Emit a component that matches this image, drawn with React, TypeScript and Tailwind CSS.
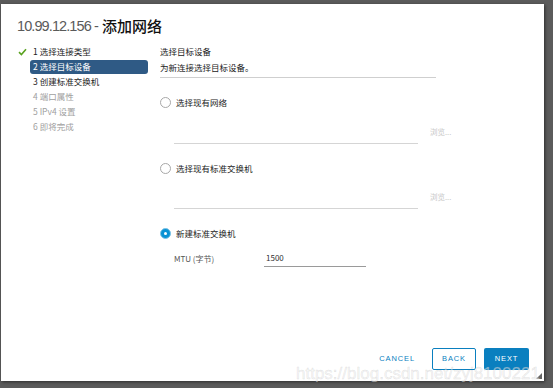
import React from "react";

const cjk = { fontFamily: '"Noto Sans CJK SC", "Noto Sans", sans-serif' };
const latin = { fontFamily: '"Liberation Sans", "Noto Sans CJK SC", sans-serif' };

function Radio({ checked, label }: { checked?: boolean; label: string }) {
  return (
    <div className="flex h-[14px] items-center">
      {checked ? (
        <span className="flex h-[11px] w-[11px] items-center justify-center rounded-full border border-[#7cc3e6] bg-[#0a92d4]">
          <span className="h-[3px] w-[3px] rounded-full bg-white" />
        </span>
      ) : (
        <span className="h-[11px] w-[11px] rounded-full border border-[#a8a8a8] bg-white" />
      )}
      <span className="ml-[5px] text-[8.5px] text-[#222]" style={cjk}>
        {label}
      </span>
    </div>
  );
}

function BrowseRow() {
  return (
    <div className="flex h-[20px] items-center">
      <div className="ml-[14px] h-[20px] w-[244px] border-b border-[#d5d5d5]" />
      <span className="ml-[12px] -mt-[4px] text-[7.5px] text-[#c8c8c8]" style={cjk}>
        浏览...
      </span>
    </div>
  );
}

export default function App() {
  const steps = [
    { n: "1", t: "选择连接类型", state: "done" },
    { n: "2", t: "选择目标设备", state: "active" },
    { n: "3", t: "创建标准交换机", state: "todo" },
    { n: "4", t: "端口属性", state: "off" },
    { n: "5", t: "IPv4 设置", state: "off" },
    { n: "6", t: "即将完成", state: "off" },
  ];
  return (
    <div className="relative h-[388px] w-[553px] overflow-hidden bg-[#5b5b5b] pl-[1px] pt-[4px]">
      <div className="relative flex h-[377px] w-[543px] flex-col bg-white shadow-[1px_1px_3px_rgba(0,0,0,0.5)]">
        {/* Title */}
        <div className="flex h-[40px] items-center pl-[16px] pt-[5px]">
          <span className="text-[14.5px] font-light tracking-[-0.9px] text-[#5a5a5a]" style={latin}>
            10.99.12.156 -{" "}
          </span>
          <span className="ml-[4px] text-[15px] font-medium text-[#111]" style={cjk}>
            添加网络
          </span>
        </div>
        {/* Body */}
        <div className="flex flex-1">
          <div className="w-[159px] pl-[17px]">
            {steps.map((s) => (
              <div key={s.n} className="flex h-[15px] items-center">
                <span className="flex w-[12px] items-center">
                  {s.state === "done" && (
                    <svg width="9" height="8" viewBox="0 0 9 8">
                      <path d="M1 4.2 L3.4 6.5 L8 1.2" fill="none" stroke="#5aa220" strokeWidth="1.6" />
                    </svg>
                  )}
                </span>
                <span
                  className={
                    s.state === "active"
                      ? "flex h-[14px] w-[118px] items-center rounded-[3px] bg-[#2f5a85] pl-[3px] text-white"
                      : "flex h-[14px] items-center pl-[3px] " +
                        (s.state === "off" ? "text-[#a0a0a0]" : "text-[#222]")
                  }
                >
                  <span className="text-[8.5px]" style={cjk}>
                    {s.n} {s.t}
                  </span>
                </span>
              </div>
            ))}
          </div>
          <div className="flex flex-col">
            <div className="flex h-[15px] items-center text-[8.5px] text-[#222]" style={cjk}>
              选择目标设备
            </div>
            <div className="flex h-[16px] items-center text-[8.5px] text-[#222]" style={cjk}>
              为新连接选择目标设备。
            </div>
            <div className="mt-[2px] h-px w-[276px] bg-[#cfcfcf]" />
            <div className="mt-[17px]">
              <Radio label="选择现有网络" />
            </div>
            <div className="mt-[15px]">
              <BrowseRow />
            </div>
            <div className="mt-[17px]">
              <Radio label="选择现有标准交换机" />
            </div>
            <div className="mt-[14px]">
              <BrowseRow />
            </div>
            <div className="mt-[17px]">
              <Radio checked label="新建标准交换机" />
            </div>
            <div className="mt-[10px] flex h-[17px] items-center">
              <span className="ml-[14px] w-[90px] text-[8px] text-[#555]" style={cjk}>
                MTU (字节)
              </span>
              <span
                className="flex h-[17px] w-[102px] items-center border-b border-[#9a9a9a] pl-[2px] text-[8px] text-[#333]"
                style={cjk}
              >
                1500
              </span>
            </div>
          </div>
        </div>
        {/* Footer */}
        <div className="mb-[11px] flex h-[22px] items-center justify-end gap-[8px] pr-[15px]" style={latin}>
          <button className="flex h-[22px] items-center px-[8px] text-[7.5px] tracking-[0.9px] text-[#0a7fbf]">
            CANCEL
          </button>
          <button className="ml-[1px] flex h-[22px] w-[44px] items-center justify-center rounded-[2px] border border-[#0a7fbf] text-[7.5px] tracking-[0.9px] text-[#0a7fbf]">
            BACK
          </button>
          <button className="flex h-[22px] w-[45px] items-center justify-center rounded-[2px] bg-[#0a7fbf] text-[7.5px] tracking-[0.9px] text-white">
            NEXT
          </button>
        </div>
        {/* resize grip */}
        <svg className="absolute bottom-[2px] right-[2px]" width="6" height="6" viewBox="0 0 6 6">
          <path d="M6 0 L6 6 L0 6 Z" fill="#666" />
        </svg>
      </div>
      {/* watermark */}
      <div
        className="pointer-events-none absolute left-[296px] top-[361px] text-[17px] text-[rgba(240,240,240,0.5)]"
        style={{ ...latin, WebkitTextStroke: "0.4px rgba(150,150,150,0.3)" }}
      >
        https://blog.csdn.net/zyj8100221
      </div>
    </div>
  );
}
